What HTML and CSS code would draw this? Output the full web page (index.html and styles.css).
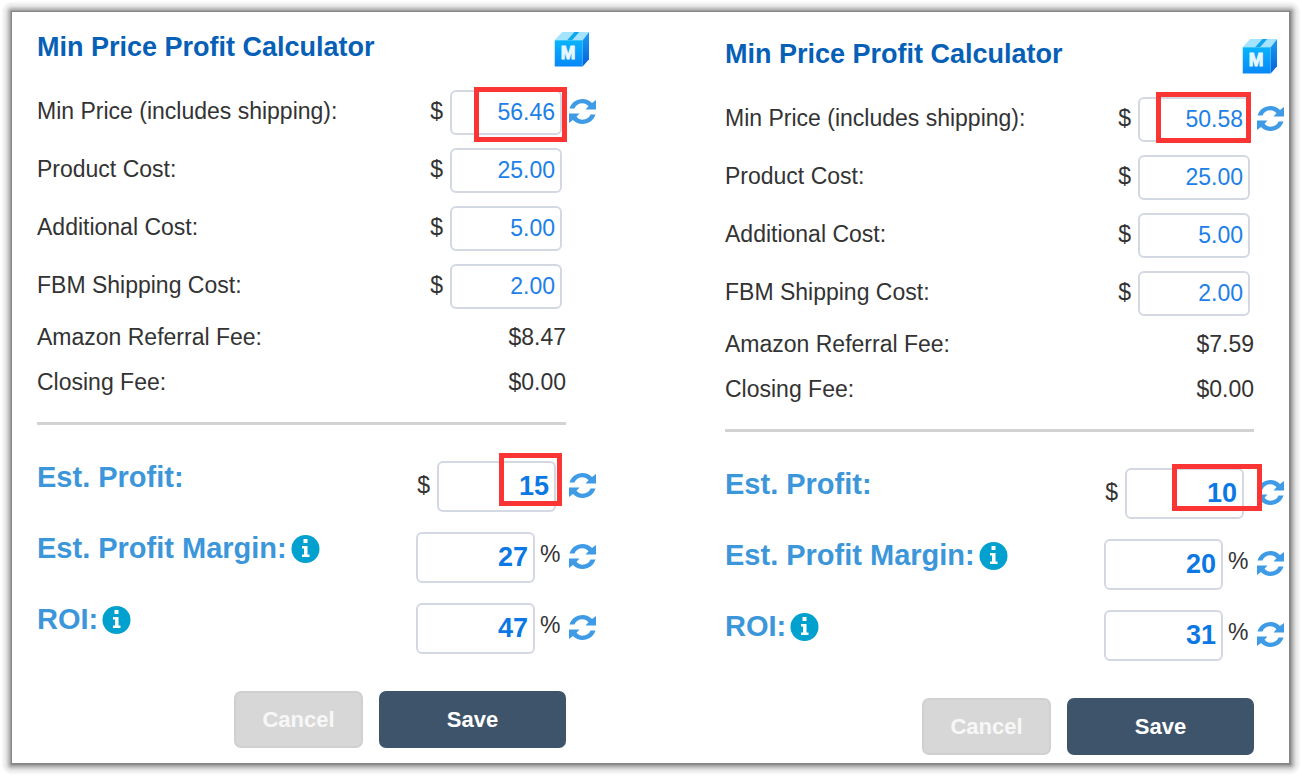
FILE: index.html
```html
<!DOCTYPE html>
<html lang="en">

<head>
    <meta charset="UTF-8">
    <meta name="viewport" content="width=device-width, initial-scale=1.0">
    <title>Min Price Profit Calculator</title>
    <link rel="stylesheet" href="styles.css">
</head>

<body>
    <!-- shared icons -->
    <svg class="sprite" aria-hidden="true">
        <defs>
            <linearGradient id="boxFront" x1="0" y1="0" x2="0" y2="1">
                <stop offset="0" stop-color="#08b4fc" />
                <stop offset="1" stop-color="#0788f8" />
            </linearGradient>
            <linearGradient id="boxSide" x1="0" y1="0" x2="0" y2="1">
                <stop offset="0" stop-color="#1c9df0" />
                <stop offset="1" stop-color="#0462dc" />
            </linearGradient>
        </defs>
        <symbol id="refresh" viewBox="0 0 27 25">
            <path d="M.5 9.500C2.500 3.500 7.500 0 13.500 0c3.700 0 7 1.400 9.500 4l4-3v9.500H16.500l3-3.200C17.800 5.200 15.800 4.300 13.500 4.300 9.500 4.300 6.800 6.300 5.500 9.500z" />
            <path d="M26.500 15.500C24.500 21.500 19.500 25 13.500 25c-3.700 0-7-1.400-9.500-4l-4 3v-9.500h10.500l-3 3.200c1.700 2.100 3.700 3 6 3 4 0 6.700-2 8-5.200z" />
        </symbol>
        <symbol id="info" viewBox="0 0 28 28">
            <circle cx="14" cy="14" r="14" fill="#00a0cf" />
            <path d="M12 4h4v4h-4zM10.500 11H16v8.500h2V22h-7.500v-2.500h2v-6h-2z" fill="#fff" />
        </symbol>
        <symbol id="box" viewBox="0 0 36 36">
            <path d="M0 8.500L8 0h27.500L29 8.500z" fill="#a5e4ff" />
            <path d="M13 8.500L20.500 0h5L18 8.500z" fill="#10a5ee" />
            <path d="M29 8.500L35.500 0v28L29 35.500z" fill="url(#boxSide)" />
            <path d="M0 8.500h29v27H0z" fill="url(#boxFront)" />
        </symbol>
    </svg>

    <div class="frame">
    <main class="sheet">
        <form class="calculator">
            <header class="calc-header">
                <h2>Min Price Profit Calculator</h2>
                <svg class="box-icon" viewBox="0 0 36 36"><use href="#box" /><text x="14" y="28" text-anchor="middle">M</text></svg>
            </header>

            <div class="costs">
                <div class="row">
                    <label for="minPrice1">Min Price (includes shipping):</label>
                    <span class="currency">$</span>
                    <div class="field">
                        <input type="text" id="minPrice1" value="56.46">
                        <span class="mark mark-price-1"></span>
                    </div>
                    <button type="button" class="refresh" aria-label="Refresh min price"><svg><use href="#refresh" /></svg></button>
                </div>
                <div class="row">
                    <label for="productCost1">Product Cost:</label>
                    <span class="currency">$</span>
                    <div class="field"><input type="text" id="productCost1" value="25.00"></div>
                </div>
                <div class="row">
                    <label for="additionalCost1">Additional Cost:</label>
                    <span class="currency">$</span>
                    <div class="field"><input type="text" id="additionalCost1" value="5.00"></div>
                </div>
                <div class="row">
                    <label for="shippingCost1">FBM Shipping Cost:</label>
                    <span class="currency">$</span>
                    <div class="field"><input type="text" id="shippingCost1" value="2.00"></div>
                </div>
            </div>

            <dl class="fees">
                <div><dt>Amazon Referral Fee:</dt><dd>$8.47</dd></div>
                <div><dt>Closing Fee:</dt><dd>$0.00</dd></div>
            </dl>

            <hr>

            <div class="results">
                <div class="row profit">
                    <label for="profit1">Est. Profit:</label>
                    <span class="currency">$</span>
                    <div class="field">
                        <input type="text" id="profit1" value="15">
                        <span class="mark mark-profit-1"></span>
                    </div>
                    <button type="button" class="refresh" aria-label="Refresh profit"><svg><use href="#refresh" /></svg></button>
                </div>
                <div class="row percent">
                    <label for="margin1">Est. Profit Margin:<svg class="info"><use href="#info" /></svg></label>
                    <div class="field"><input type="text" id="margin1" value="27"></div>
                    <span class="unit">%</span>
                    <button type="button" class="refresh" aria-label="Refresh margin"><svg><use href="#refresh" /></svg></button>
                </div>
                <div class="row percent">
                    <label for="roi1">ROI:<svg class="info"><use href="#info" /></svg></label>
                    <div class="field"><input type="text" id="roi1" value="47"></div>
                    <span class="unit">%</span>
                    <button type="button" class="refresh" aria-label="Refresh ROI"><svg><use href="#refresh" /></svg></button>
                </div>
            </div>

            <div class="actions">
                <button type="button" class="btn cancel">Cancel</button>
                <button type="button" class="btn save">Save</button>
            </div>
        </form>

        <form class="calculator lowered">
            <header class="calc-header">
                <h2>Min Price Profit Calculator</h2>
                <svg class="box-icon" viewBox="0 0 36 36"><use href="#box" /><text x="14" y="28" text-anchor="middle">M</text></svg>
            </header>

            <div class="costs">
                <div class="row">
                    <label for="minPrice2">Min Price (includes shipping):</label>
                    <span class="currency">$</span>
                    <div class="field">
                        <input type="text" id="minPrice2" value="50.58">
                        <span class="mark mark-price-2"></span>
                    </div>
                    <button type="button" class="refresh" aria-label="Refresh min price"><svg><use href="#refresh" /></svg></button>
                </div>
                <div class="row">
                    <label for="productCost2">Product Cost:</label>
                    <span class="currency">$</span>
                    <div class="field"><input type="text" id="productCost2" value="25.00"></div>
                </div>
                <div class="row">
                    <label for="additionalCost2">Additional Cost:</label>
                    <span class="currency">$</span>
                    <div class="field"><input type="text" id="additionalCost2" value="5.00"></div>
                </div>
                <div class="row">
                    <label for="shippingCost2">FBM Shipping Cost:</label>
                    <span class="currency">$</span>
                    <div class="field"><input type="text" id="shippingCost2" value="2.00"></div>
                </div>
            </div>

            <dl class="fees">
                <div><dt>Amazon Referral Fee:</dt><dd>$7.59</dd></div>
                <div><dt>Closing Fee:</dt><dd>$0.00</dd></div>
            </dl>

            <hr>

            <div class="results">
                <div class="row profit">
                    <label for="profit2">Est. Profit:</label>
                    <span class="currency">$</span>
                    <div class="field">
                        <input type="text" id="profit2" value="10">
                        <span class="mark mark-profit-2"></span>
                    </div>
                    <button type="button" class="refresh" aria-label="Refresh profit"><svg><use href="#refresh" /></svg></button>
                </div>
                <div class="row percent">
                    <label for="margin2">Est. Profit Margin:<svg class="info"><use href="#info" /></svg></label>
                    <div class="field"><input type="text" id="margin2" value="20"></div>
                    <span class="unit">%</span>
                    <button type="button" class="refresh" aria-label="Refresh margin"><svg><use href="#refresh" /></svg></button>
                </div>
                <div class="row percent">
                    <label for="roi2">ROI:<svg class="info"><use href="#info" /></svg></label>
                    <div class="field"><input type="text" id="roi2" value="31"></div>
                    <span class="unit">%</span>
                    <button type="button" class="refresh" aria-label="Refresh ROI"><svg><use href="#refresh" /></svg></button>
                </div>
            </div>

            <div class="actions">
                <button type="button" class="btn cancel">Cancel</button>
                <button type="button" class="btn save">Save</button>
            </div>
        </form>
    </main>
    </div>
</body>

</html>
```
FILE: styles.css
```css
* {
    box-sizing: border-box;
}

body {
    margin: 0;
    background: #fff;
    color: #333;
    font-family: "Liberation Sans", Arial, sans-serif;
    font-size: 23px;
    line-height: 30px;
}

.sprite {
    position: absolute;
    width: 0;
    height: 0;
}

/* soft grey edge round the sheet: four corners, then four sides */
.frame {
    --fade: #858585 0, #bdbdbd 3px, #e6e6e6 6px, #fff 11px;
    padding: 11px 12px 12px 11px;
    background:
        radial-gradient(circle at 100% 100%, var(--fade)) left top / 12px 12px,
        radial-gradient(circle at 0 100%, var(--fade)) right top / 12px 12px,
        radial-gradient(circle at 100% 0, var(--fade)) left bottom / 12px 12px,
        radial-gradient(circle at 0 0, var(--fade)) right bottom / 12px 12px,
        linear-gradient(to top, var(--fade)) left top / 100% 12px,
        linear-gradient(to bottom, var(--fade)) left bottom / 100% 12px,
        linear-gradient(to left, var(--fade)) left top / 12px 100%,
        linear-gradient(to right, var(--fade)) right top / 12px 100%;
    background-repeat: no-repeat;
}

.sheet {
    display: grid;
    grid-template-columns: 1fr 1fr;
    gap: 128px;
    padding: 20px 4px 8px 25px;
    border: 1px solid #858585;
    background: #fff;
}

.lowered {
    margin-top: 7px;
}

.calc-header {
    display: flex;
    justify-content: space-between;
    align-items: flex-start;
    padding-right: 7px;
    margin-bottom: 23px;
}

h2 {
    margin: 0;
    font-size: 27px;
    line-height: 30px;
    color: #0560b6;
}

.box-icon {
    width: 36px;
    height: 35px;
}

.box-icon text {
    font-size: 18px;
    font-weight: bold;
    fill: #e8f7ff;
    stroke: #e8f7ff;
}

.row {
    display: flex;
    align-items: center;
}

.row label {
    flex: 1;
    padding-bottom: 3px;
}

.currency {
    padding-bottom: 4px;
}

.costs {
    display: grid;
    gap: 13px;
}

.costs .row {
    padding-right: 35px;
}

.costs .refresh {
    margin-right: -35px;
}

.field {
    position: relative;
    width: 112px;
    height: 45px;
    margin-left: 7px;
}

.field input {
    display: block;
    width: 100%;
    height: 100%;
    padding: 0 5px 1px;
    border: 2px solid #d3d8e3;
    border-radius: 6px;
    background: #fff;
    color: #2080e8;
    font: inherit;
    text-align: right;
}

.refresh {
    flex: none;
    width: 28px;
    margin-left: 7px;
    padding: 0 0 3px;
    border: none;
    background: none;
    cursor: pointer;
}

.refresh svg {
    display: block;
    width: 27px;
    height: 25px;
    fill: #3f9be6;
}

/* red highlight frames */
.mark {
    position: absolute;
    z-index: 1;
    border: 5px solid #fb3434;
    pointer-events: none;
}

.mark-price-1 {
    left: 24px;
    top: -3px;
    width: 93px;
    height: 55px;
}

.mark-price-2 {
    left: 18px;
    top: -5px;
    width: 95px;
    height: 51px;
}

.mark-profit-1 {
    left: 62px;
    top: -8px;
    width: 63px;
    height: 53px;
}

.mark-profit-2 {
    left: 47px;
    top: -4px;
    width: 90px;
    height: 47px;
}

.fees {
    margin: 6px 31px 17px 0;
}

.fees div {
    display: flex;
    justify-content: space-between;
    line-height: 45px;
}

.fees dd {
    margin: 0;
}

hr {
    height: 3px;
    margin: 0 31px 36px 0;
    border: none;
    background: #d2d2d2;
}

.results {
    display: grid;
    gap: 20px;
}

.results label {
    display: flex;
    align-items: center;
    padding-bottom: 20px;
    font-size: 29px;
    font-weight: bold;
    color: #3c96da;
}

.results .field {
    width: 119px;
    height: 51px;
}

.results .field input {
    font-size: 27px;
    font-weight: bold;
    color: #0c78e4;
}

.profit .refresh {
    margin-left: 13px;
}

.percent .refresh {
    margin-left: 8px;
}

.unit {
    width: 26px;
    padding: 0 0 8px 5px;
}

.info {
    width: 29px;
    height: 28px;
    margin: 3px 0 0 4px;
}

.actions {
    display: flex;
    justify-content: flex-end;
    gap: 16px;
    margin: 37px 31px 0 0;
}

.btn {
    height: 57px;
    border-radius: 7px;
    color: #fff;
    font-family: inherit;
    font-size: 22px;
    font-weight: bold;
    cursor: pointer;
}

.cancel {
    width: 129px;
    border: 2px solid #d0d0d0;
    background: #d7d7d7;
    color: #f7f7f7;
}

.save {
    width: 187px;
    border: none;
    background: #3e546b;
}
```
